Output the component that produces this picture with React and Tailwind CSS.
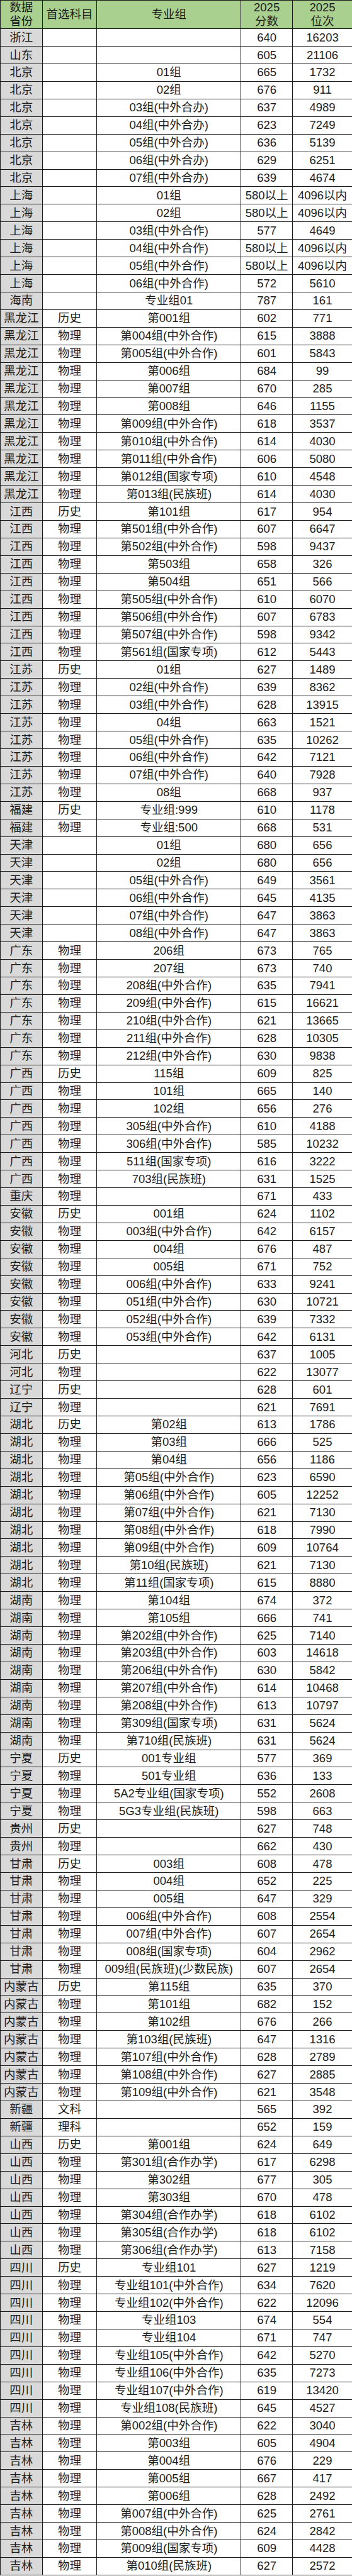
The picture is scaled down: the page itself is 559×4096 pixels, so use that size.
const rows = [
  '浙江|||640|16203',
  '山东|||605|21106',
  '北京||01组|665|1732',
  '北京||02组|676|911',
  '北京||03组(中外合办)|637|4989',
  '北京||04组(中外合办)|623|7249',
  '北京||05组(中外合办)|636|5139',
  '北京||06组(中外合办)|629|6251',
  '北京||07组(中外合办)|639|4674',
  '上海||01组|580以上|4096以内',
  '上海||02组|580以上|4096以内',
  '上海||03组(中外合作)|577|4649',
  '上海||04组(中外合作)|580以上|4096以内',
  '上海||05组(中外合作)|580以上|4096以内',
  '上海||06组(中外合作)|572|5610',
  '海南||专业组01|787|161',
  '黑龙江|历史|第001组|602|771',
  '黑龙江|物理|第004组(中外合作)|615|3888',
  '黑龙江|物理|第005组(中外合作)|601|5843',
  '黑龙江|物理|第006组|684|99',
  '黑龙江|物理|第007组|670|285',
  '黑龙江|物理|第008组|646|1155',
  '黑龙江|物理|第009组(中外合作)|618|3537',
  '黑龙江|物理|第010组(中外合作)|614|4030',
  '黑龙江|物理|第011组(中外合作)|606|5080',
  '黑龙江|物理|第012组(国家专项)|610|4548',
  '黑龙江|物理|第013组(民族班)|614|4030',
  '江西|历史|第101组|617|954',
  '江西|物理|第501组(中外合作)|607|6647',
  '江西|物理|第502组(中外合作)|598|9437',
  '江西|物理|第503组|658|326',
  '江西|物理|第504组|651|566',
  '江西|物理|第505组(中外合作)|610|6070',
  '江西|物理|第506组(中外合作)|607|6783',
  '江西|物理|第507组(中外合作)|598|9342',
  '江西|物理|第561组(国家专项)|612|5443',
  '江苏|历史|01组|627|1489',
  '江苏|物理|02组(中外合作)|639|8362',
  '江苏|物理|03组(中外合作)|628|13915',
  '江苏|物理|04组|663|1521',
  '江苏|物理|05组(中外合作)|635|10262',
  '江苏|物理|06组(中外合作)|642|7121',
  '江苏|物理|07组(中外合作)|640|7928',
  '江苏|物理|08组|668|937',
  '福建|历史|专业组:999|610|1178',
  '福建|物理|专业组:500|668|531',
  '天津||01组|680|656',
  '天津||02组|680|656',
  '天津||05组(中外合作)|649|3561',
  '天津||06组(中外合作)|645|4135',
  '天津||07组(中外合作)|647|3863',
  '天津||08组(中外合作)|647|3863',
  '广东|物理|206组|673|765',
  '广东|物理|207组|673|740',
  '广东|物理|208组(中外合作)|635|7941',
  '广东|物理|209组(中外合作)|615|16621',
  '广东|物理|210组(中外合作)|621|13665',
  '广东|物理|211组(中外合作)|628|10305',
  '广东|物理|212组(中外合作)|630|9838',
  '广西|历史|115组|609|825',
  '广西|物理|101组|665|140',
  '广西|物理|102组|656|276',
  '广西|物理|305组(中外合作)|610|4188',
  '广西|物理|306组(中外合作)|585|10232',
  '广西|物理|511组(国家专项)|616|3222',
  '广西|物理|703组(民族班)|631|1525',
  '重庆|物理||671|433',
  '安徽|历史|001组|624|1102',
  '安徽|物理|003组(中外合作)|642|6157',
  '安徽|物理|004组|676|487',
  '安徽|物理|005组|671|752',
  '安徽|物理|006组(中外合作)|633|9241',
  '安徽|物理|051组(中外合作)|630|10721',
  '安徽|物理|052组(中外合作)|639|7332',
  '安徽|物理|053组(中外合作)|642|6131',
  '河北|历史||637|1005',
  '河北|物理||622|13077',
  '辽宁|历史||628|601',
  '辽宁|物理||621|7691',
  '湖北|历史|第02组|613|1786',
  '湖北|物理|第03组|666|525',
  '湖北|物理|第04组|656|1186',
  '湖北|物理|第05组(中外合作)|623|6590',
  '湖北|物理|第06组(中外合作)|605|12252',
  '湖北|物理|第07组(中外合作)|621|7130',
  '湖北|物理|第08组(中外合作)|618|7990',
  '湖北|物理|第09组(中外合作)|609|10764',
  '湖北|物理|第10组(民族班)|621|7130',
  '湖北|物理|第11组(国家专项)|615|8880',
  '湖南|物理|第104组|674|372',
  '湖南|物理|第105组|666|741',
  '湖南|物理|第202组(中外合作)|625|7140',
  '湖南|物理|第203组(中外合作)|603|14618',
  '湖南|物理|第206组(中外合作)|630|5842',
  '湖南|物理|第207组(中外合作)|614|10468',
  '湖南|物理|第208组(中外合作)|613|10797',
  '湖南|物理|第309组(国家专项)|631|5624',
  '湖南|物理|第710组(民族班)|631|5624',
  '宁夏|历史|001专业组|577|369',
  '宁夏|物理|501专业组|636|133',
  '宁夏|物理|5A2专业组(国家专项)|552|2608',
  '宁夏|物理|5G3专业组(民族班)|598|663',
  '贵州|历史||627|748',
  '贵州|物理||662|430',
  '甘肃|历史|003组|608|478',
  '甘肃|物理|004组|652|225',
  '甘肃|物理|005组|647|329',
  '甘肃|物理|006组(中外合作)|608|2554',
  '甘肃|物理|007组(中外合作)|607|2654',
  '甘肃|物理|008组(国家专项)|604|2962',
  '甘肃|物理|009组(民族班)(少数民族)|607|2654',
  '内蒙古|历史|第115组|635|370',
  '内蒙古|物理|第101组|682|152',
  '内蒙古|物理|第102组|676|266',
  '内蒙古|物理|第103组(民族班)|647|1316',
  '内蒙古|物理|第107组(中外合作)|628|2789',
  '内蒙古|物理|第108组(中外合作)|627|2885',
  '内蒙古|物理|第109组(中外合作)|621|3548',
  '新疆|文科||565|392',
  '新疆|理科||652|159',
  '山西|历史|第001组|624|649',
  '山西|物理|第301组(合作办学)|617|6298',
  '山西|物理|第302组|677|305',
  '山西|物理|第303组|670|478',
  '山西|物理|第304组(合作办学)|618|6102',
  '山西|物理|第305组(合作办学)|618|6102',
  '山西|物理|第306组(合作办学)|613|7158',
  '四川|历史|专业组101|627|1219',
  '四川|物理|专业组101(中外合作)|634|7620',
  '四川|物理|专业组102(中外合作)|622|12096',
  '四川|物理|专业组103|674|554',
  '四川|物理|专业组104|671|747',
  '四川|物理|专业组105(中外合作)|642|5270',
  '四川|物理|专业组106(中外合作)|635|7273',
  '四川|物理|专业组107(中外合作)|619|13420',
  '四川|物理|专业组108(民族班)|645|4527',
  '吉林|物理|第002组(中外合作)|622|3040',
  '吉林|物理|第003组|605|4904',
  '吉林|物理|第004组|676|229',
  '吉林|物理|第005组|667|417',
  '吉林|物理|第006组|628|2492',
  '吉林|物理|第007组(中外合作)|625|2761',
  '吉林|物理|第008组(中外合作)|624|2842',
  '吉林|物理|第009组(国家专项)|609|4428',
  '吉林|物理|第010组(民族班)|627|2572',
].map((line) => line.split('|'));

const cell = 'flex items-center justify-center border-r border-b border-[#1a1a1a] whitespace-nowrap';

const App = () => {
  return (
    <div
      className="w-[559px] bg-white text-[#1c1c1c] text-[18.5px] leading-[22px]"
      style={{ fontFamily: '"Liberation Sans", "Noto Sans CJK SC", sans-serif' }}
    >
      <div className="grid grid-cols-[67.7px_86.6px_228.9px_81.9px_93.9px] grid-rows-[46.2px] auto-rows-[27.93px]">
        <div className={`${cell} border-l border-t bg-[#a9d08e] flex-col leading-[22.5px]`}>
          <span>数据</span>
          <span>省份</span>
        </div>
        <div className={`${cell} border-t bg-[#a9d08e]`}>首选科目</div>
        <div className={`${cell} border-t bg-[#a9d08e]`}>专业组</div>
        <div className={`${cell} border-t bg-[#a9d08e] flex-col leading-[22.5px]`}>
          <span>2025</span>
          <span>分数</span>
        </div>
        <div className={`${cell} border-t border-r-0 bg-[#a9d08e] flex-col leading-[22.5px]`}>
          <span>2025</span>
          <span>位次</span>
        </div>

        {rows.map((r, idx) => (
          <div key={idx} className="contents">
            <div className={`${cell} border-l bg-[#d9d9d9]`}>{r[0]}</div>
            <div className={cell}>{r[1]}</div>
            <div className={cell}>{r[2]}</div>
            <div className={cell}>{r[3]}</div>
            <div className={`${cell} border-r-0`}>{r[4]}</div>
          </div>
        ))}
      </div>
    </div>
  );
};

export default App;
